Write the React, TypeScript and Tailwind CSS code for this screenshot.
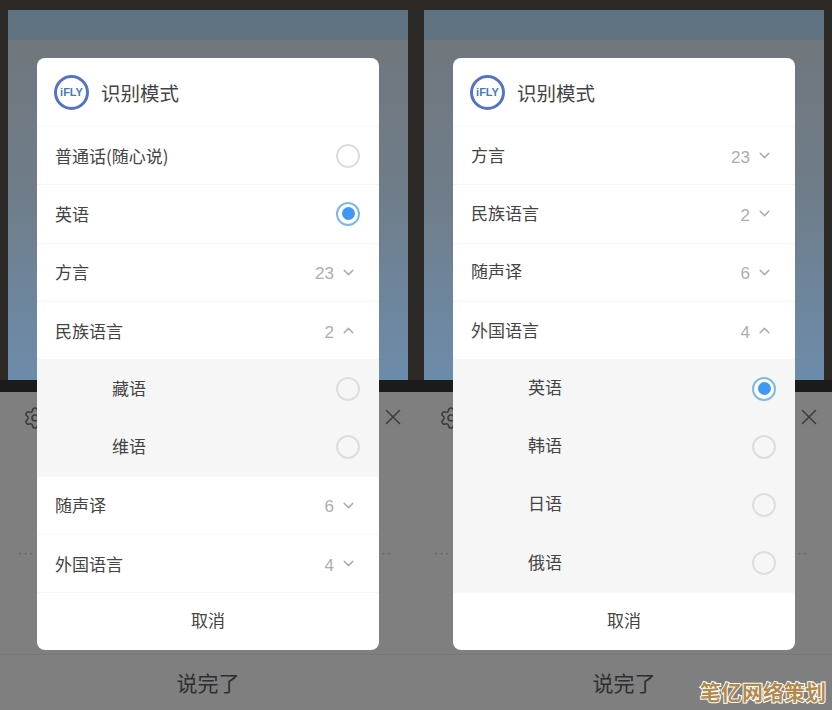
import { ChevronDown, ChevronUp, Settings, X } from "lucide-react";

type Row =
  | { kind: "radio"; label: string; selected?: boolean; sub?: boolean }
  | { kind: "group"; label: string; count: number; open?: boolean };

const leftRows: Row[] = [
  { kind: "radio", label: "普通话(随心说)" },
  { kind: "radio", label: "英语", selected: true },
  { kind: "group", label: "方言", count: 23 },
  { kind: "group", label: "民族语言", count: 2, open: true },
  { kind: "radio", label: "藏语", sub: true },
  { kind: "radio", label: "维语", sub: true },
  { kind: "group", label: "随声译", count: 6 },
  { kind: "group", label: "外国语言", count: 4 },
];

const rightRows: Row[] = [
  { kind: "group", label: "方言", count: 23 },
  { kind: "group", label: "民族语言", count: 2 },
  { kind: "group", label: "随声译", count: 6 },
  { kind: "group", label: "外国语言", count: 4, open: true },
  { kind: "radio", label: "英语", selected: true, sub: true },
  { kind: "radio", label: "韩语", sub: true },
  { kind: "radio", label: "日语", sub: true },
  { kind: "radio", label: "俄语", sub: true },
];

function IflyLogo() {
  return (
    <div className="w-[35px] h-[35px] rounded-full border-[3px] border-[#5573c2] flex items-center justify-center">
      <span className="text-[11px] font-bold leading-none text-[#4a76c4] font-['Liberation_Sans',sans-serif]">iFLY</span>
    </div>
  );
}

function Radio({ selected }: { selected?: boolean }) {
  if (selected) {
    return (
      <div className="w-6 h-6 rounded-full border-2 border-[#7db8e8] bg-white flex items-center justify-center">
        <div className="w-[13px] h-[13px] rounded-full bg-[#3f97f6]" />
      </div>
    );
  }
  return <div className="w-6 h-6 rounded-full border-2 border-[#dedede]" />;
}

function ListRow({ row, lift }: { row: Row; lift?: boolean }) {
  const label = (
    <span className={lift ? "text-[#444] -translate-y-px" : "text-[#444]"}>
      <span className={row.kind === "radio" && row.sub ? "inline-block -translate-y-px" : "inline-block"}>{row.label}</span>
    </span>
  );
  if (row.kind === "group") {
    const Chevron = row.open ? ChevronUp : ChevronDown;
    return (
      <div className="h-[58.25px] pl-[18px] pr-[22px] flex items-center justify-between bg-white border-b border-[#f6f6f6]">
        {label}
        <div className="flex items-center gap-[6px] text-[#adadad]">
          <span className="text-[17px] translate-y-[2px] font-['Liberation_Sans',sans-serif]">{row.count}</span>
          <Chevron size={17} strokeWidth={2} />
        </div>
      </div>
    );
  }
  return (
    <div
      className={
        row.sub
          ? "h-[58.25px] pl-[75px] pr-[19px] flex items-center justify-between bg-[#f6f6f6] border-b border-[#f8f8f8]"
          : "h-[58.25px] pl-[18px] pr-[19px] flex items-center justify-between bg-white border-b border-[#f6f6f6]"
      }
    >
      {label}
      <Radio selected={row.selected} />
    </div>
  );
}

function Phone({ rows, lift }: { rows: Row[]; lift?: boolean }) {
  return (
    <div className="relative w-[416px] h-full flex flex-col bg-[#2c2927]">
      <div className="h-[10px]" />
      <div className="mx-2 flex-1 flex flex-col bg-gradient-to-b from-[#70767a] via-[#6f7d8a] to-[#6c8cab]">
        <div className="h-[30px] bg-[#5f7282]" />
      </div>
      <div className="h-3 bg-[#1b1b1b]" />
      <div className="h-[318px] flex flex-col bg-[#7f7f7f]">
        <div className="h-[263px] relative border-b border-[#767676]">
          <Settings size={24} strokeWidth={1.6} className="absolute left-[23px] top-[14px] text-[#3d3d3d]" />
          <X size={26} strokeWidth={1.5} className="absolute right-[10px] top-[12px] text-[#3d3d3d]" />
          <div className="absolute left-[18px] right-[24px] top-[157px] flex justify-between text-[13px] leading-[8px] tracking-[1px] text-[#5c5c5c] font-['Liberation_Sans',sans-serif]">
            <span>···</span>
            <span>···</span>
          </div>
        </div>
        <div className="flex-1 flex items-center justify-center text-[21px] text-[#2e2e2e]">说完了</div>
      </div>

      {/* dialog */}
      <div className="absolute left-[37px] top-[58px] w-[342px] h-[592px] rounded-lg overflow-hidden bg-white flex flex-col text-[17px]">
        <div className="h-[69px] pl-[17px] flex items-center gap-[12px] border-b border-[#f6f6f6]">
          <IflyLogo />
          <span className="text-[19.5px] text-[#444] translate-y-px">识别模式</span>
        </div>
        {rows.map((row) => (
          <ListRow key={row.label} row={row} lift={lift} />
        ))}
        <div className="flex-1 flex items-center justify-center text-[#444] pb-[3px]">取消</div>
      </div>
    </div>
  );
}

export default function App() {
  return (
    <div className="relative w-[832px] h-[710px] flex overflow-hidden font-['Noto_Sans_CJK_SC',sans-serif]">
      <Phone rows={leftRows} />
      <Phone rows={rightRows} lift />
      <div className="absolute right-[6px] bottom-[8px] text-[21px] font-bold leading-none text-[#b08a4e] [-webkit-text-stroke:2px_#fff] [paint-order:stroke_fill]">
        笔亿网络策划
      </div>
    </div>
  );
}
